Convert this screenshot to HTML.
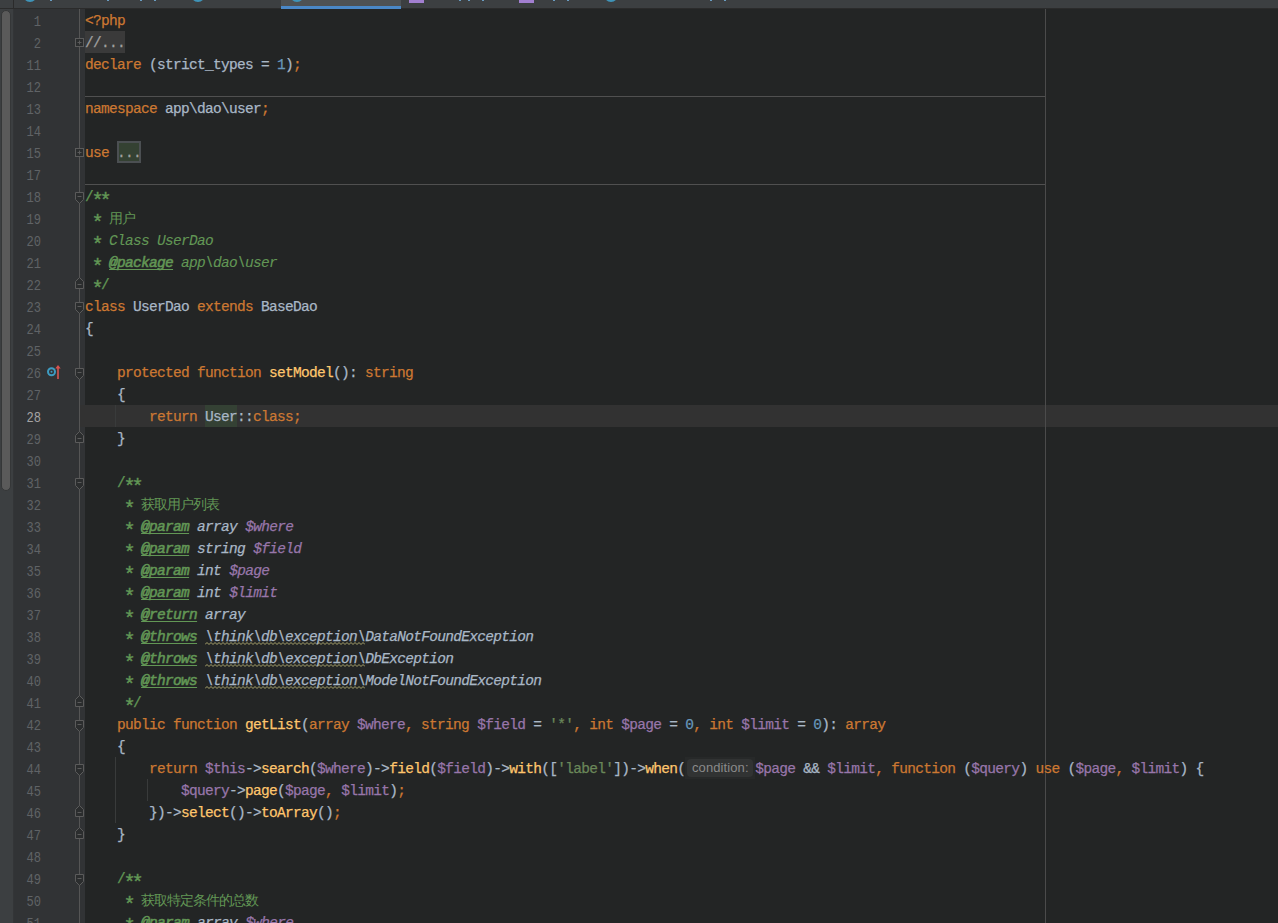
<!DOCTYPE html>
<html><head><meta charset="utf-8"><style>
html,body{margin:0;padding:0;width:1278px;height:923px;overflow:hidden;background:#232525;}
body{position:relative;font-family:"Liberation Mono",monospace;}
#tabs{position:absolute;left:0;top:0;width:1278px;height:8px;background:#3c3f41;border-bottom:1px solid #2b2b2b;}
#left{position:absolute;left:0;top:9px;width:13px;height:914px;background:#3c3f41;border-right:1px solid #333537;}
#thumb{position:absolute;left:1px;top:1px;width:8px;height:479px;background:#5a5a5a;border-radius:5px;border:1px solid #353738;}
#gutter{position:absolute;left:14px;top:9px;width:71px;height:914px;background:#313335;}
#editor{position:absolute;left:85px;top:9px;width:1193px;height:914px;background:#232525;}
#curline{position:absolute;left:80px;top:405px;width:1198px;height:22px;background:#323232;}
.ln{position:absolute;left:14px;width:27px;height:22px;line-height:22px;text-align:right;color:#606366;font-size:14.2px;letter-spacing:0px;padding-top:2px;transform:scaleX(0.85);transform-origin:100% 50%;}
.ln.cur{color:#a4a3a3;}
.row{position:absolute;left:85px;height:22px;line-height:22px;white-space:pre;font-size:14.5px;letter-spacing:-0.7px;color:#a9b7c6;-webkit-text-stroke:0.25px;}
.k{color:#cc7832}.f{color:#ffc66d}.v{color:#9876aa}.t{color:#a9b7c6}.n{color:#6897bb}.s{color:#6a8759}
.c{color:#629755}.ci{color:#629755;font-style:italic;-webkit-text-stroke:0.1px}
.tag{color:#629755;-webkit-text-stroke:0.55px;font-style:italic;text-decoration:underline;text-decoration-skip-ink:none;text-underline-offset:2px}
.dt{color:#a9b7c6;font-style:italic}.dv{color:#9876aa;font-style:italic}
.wv{color:#a9b7c6;font-style:italic}
.hl{}
.fold{color:#a0a0a0}
.foldg{color:#a0a0a0}
.hint{display:inline-block;width:71px;height:18px;vertical-align:middle;position:relative;}
.hint span{position:absolute;left:2px;top:0;width:66px;height:18px;line-height:18px;background:#333535;border-radius:4px;color:#878787;font-family:"Liberation Sans",sans-serif;font-size:12px;text-align:center}
.sep{position:absolute;left:85px;width:960px;height:1px;background:#505050;}
#margin{position:absolute;left:1045px;top:9px;width:1px;height:914px;background:#4b4b4b;}
.ast{display:inline-block;transform:translateY(4.8px) scale(1.4);}
.cjk{font-size:13.6px;letter-spacing:-0.95px;-webkit-text-stroke:0;}

</style></head><body>
<div id="tabs"></div>
<div id="left"><div id="thumb"></div></div>
<div id="gutter"></div>
<div id="editor"></div>

<div style="position:absolute;left:80px;top:405px;width:1198px;height:22px;background:#323232"></div>
<div style="position:absolute;left:85px;top:31px;width:40px;height:22px;background:#3a3a3a"></div>
<div style="position:absolute;left:117px;top:141px;width:20px;height:18px;background:#344132;border:2px solid #4b4f52"></div>
<div style="position:absolute;left:205px;top:405px;width:32px;height:22px;background:#344134"></div>
<div style="position:absolute;left:685px;top:757px;width:70px;height:22px;background:#272929"></div>
<div style="position:absolute;left:687px;top:759px;width:66px;height:18px;background:#313333;border-radius:4px"></div>
<div style="position:absolute;left:692px;top:759px;height:18px;line-height:18px;color:#8a8a8a;font-family:'Liberation Sans',sans-serif;font-size:13px;letter-spacing:0.1px;white-space:pre">condition:</div>
<div class="sep" style="top:96px"></div>
<div class="sep" style="top:184px"></div>
<div id="margin"></div>
<div style="position:absolute;left:115px;top:405px;width:1px;height:22px;background:#393b3b"></div>
<div style="position:absolute;left:115px;top:757px;width:1px;height:66px;background:#393b3b"></div>
<div style="position:absolute;left:147px;top:779px;width:1px;height:22px;background:#393b3b"></div>
<svg style="position:absolute;left:0;top:0" width="100" height="923"><line x1="79.5" y1="9" x2="79.5" y2="923" stroke="#555555" stroke-width="1"/><rect x="75.5" y="38.5" width="8" height="8" fill="#2b2d2e" stroke="#5b5b5b"/><path d="M77.5 42.5H81.5M79.5 40.5V44.5" stroke="#5b5b5b" fill="none"/><rect x="75.5" y="148.5" width="8" height="8" fill="#2b2d2e" stroke="#5b5b5b"/><path d="M77.5 152.5H81.5M79.5 150.5V154.5" stroke="#5b5b5b" fill="none"/><path d="M75.5 192.5H83.5V199.5L79.5 203.5L75.5 199.5Z" fill="#2b2d2e" stroke="#5b5b5b"/><path d="M77.5 196.5H81.5" stroke="#5b5b5b"/><path d="M75.5 302.5H83.5V309.5L79.5 313.5L75.5 309.5Z" fill="#2b2d2e" stroke="#5b5b5b"/><path d="M77.5 306.5H81.5" stroke="#5b5b5b"/><path d="M75.5 368.5H83.5V375.5L79.5 379.5L75.5 375.5Z" fill="#2b2d2e" stroke="#5b5b5b"/><path d="M77.5 372.5H81.5" stroke="#5b5b5b"/><path d="M75.5 478.5H83.5V485.5L79.5 489.5L75.5 485.5Z" fill="#2b2d2e" stroke="#5b5b5b"/><path d="M77.5 482.5H81.5" stroke="#5b5b5b"/><path d="M75.5 720.5H83.5V727.5L79.5 731.5L75.5 727.5Z" fill="#2b2d2e" stroke="#5b5b5b"/><path d="M77.5 724.5H81.5" stroke="#5b5b5b"/><path d="M75.5 764.5H83.5V771.5L79.5 775.5L75.5 771.5Z" fill="#2b2d2e" stroke="#5b5b5b"/><path d="M77.5 768.5H81.5" stroke="#5b5b5b"/><path d="M75.5 874.5H83.5V881.5L79.5 885.5L75.5 881.5Z" fill="#2b2d2e" stroke="#5b5b5b"/><path d="M77.5 878.5H81.5" stroke="#5b5b5b"/><path d="M79.5 277.5L83.5 281.5V288.5H75.5V281.5Z" fill="#2b2d2e" stroke="#5b5b5b"/><path d="M77.5 284.5H81.5" stroke="#5b5b5b"/><path d="M79.5 431.5L83.5 435.5V442.5H75.5V435.5Z" fill="#2b2d2e" stroke="#5b5b5b"/><path d="M77.5 438.5H81.5" stroke="#5b5b5b"/><path d="M79.5 695.5L83.5 699.5V706.5H75.5V699.5Z" fill="#2b2d2e" stroke="#5b5b5b"/><path d="M77.5 702.5H81.5" stroke="#5b5b5b"/><path d="M79.5 805.5L83.5 809.5V816.5H75.5V809.5Z" fill="#2b2d2e" stroke="#5b5b5b"/><path d="M77.5 812.5H81.5" stroke="#5b5b5b"/><path d="M79.5 827.5L83.5 831.5V838.5H75.5V831.5Z" fill="#2b2d2e" stroke="#5b5b5b"/><path d="M77.5 834.5H81.5" stroke="#5b5b5b"/><circle cx="51.5" cy="371.7" r="3.5" fill="none" stroke="#3d9bc1" stroke-width="2"/><circle cx="51.5" cy="371.7" r="1" fill="#3d9bc1"/><rect x="57" y="368" width="2" height="11" fill="#b34e4b"/><path d="M58 365L60.7 368.5H55.3Z" fill="#d9534f"/></svg>
<svg style="position:absolute;left:205px;top:0" width="160" height="923"><path d="M0 644.5 L2 642.5 L4 644.5 L6 642.5 L8 644.5 L10 642.5 L12 644.5 L14 642.5 L16 644.5 L18 642.5 L20 644.5 L22 642.5 L24 644.5 L26 642.5 L28 644.5 L30 642.5 L32 644.5 L34 642.5 L36 644.5 L38 642.5 L40 644.5 L42 642.5 L44 644.5 L46 642.5 L48 644.5 L50 642.5 L52 644.5 L54 642.5 L56 644.5 L58 642.5 L60 644.5 L62 642.5 L64 644.5 L66 642.5 L68 644.5 L70 642.5 L72 644.5 L74 642.5 L76 644.5 L78 642.5 L80 644.5 L82 642.5 L84 644.5 L86 642.5 L88 644.5 L90 642.5 L92 644.5 L94 642.5 L96 644.5 L98 642.5 L100 644.5 L102 642.5 L104 644.5 L106 642.5 L108 644.5 L110 642.5 L112 644.5 L114 642.5 L116 644.5 L118 642.5 L120 644.5 L122 642.5 L124 644.5 L126 642.5 L128 644.5 L130 642.5 L132 644.5 L134 642.5 L136 644.5 L138 642.5 L140 644.5 L142 642.5 L144 644.5 L146 642.5 L148 644.5 L150 642.5 L152 644.5 L154 642.5 L156 644.5 L158 642.5 L160 644.5" fill="none" stroke="#aaa56e" stroke-width="1"/><path d="M0 666.5 L2 664.5 L4 666.5 L6 664.5 L8 666.5 L10 664.5 L12 666.5 L14 664.5 L16 666.5 L18 664.5 L20 666.5 L22 664.5 L24 666.5 L26 664.5 L28 666.5 L30 664.5 L32 666.5 L34 664.5 L36 666.5 L38 664.5 L40 666.5 L42 664.5 L44 666.5 L46 664.5 L48 666.5 L50 664.5 L52 666.5 L54 664.5 L56 666.5 L58 664.5 L60 666.5 L62 664.5 L64 666.5 L66 664.5 L68 666.5 L70 664.5 L72 666.5 L74 664.5 L76 666.5 L78 664.5 L80 666.5 L82 664.5 L84 666.5 L86 664.5 L88 666.5 L90 664.5 L92 666.5 L94 664.5 L96 666.5 L98 664.5 L100 666.5 L102 664.5 L104 666.5 L106 664.5 L108 666.5 L110 664.5 L112 666.5 L114 664.5 L116 666.5 L118 664.5 L120 666.5 L122 664.5 L124 666.5 L126 664.5 L128 666.5 L130 664.5 L132 666.5 L134 664.5 L136 666.5 L138 664.5 L140 666.5 L142 664.5 L144 666.5 L146 664.5 L148 666.5 L150 664.5 L152 666.5 L154 664.5 L156 666.5 L158 664.5 L160 666.5" fill="none" stroke="#aaa56e" stroke-width="1"/><path d="M0 688.5 L2 686.5 L4 688.5 L6 686.5 L8 688.5 L10 686.5 L12 688.5 L14 686.5 L16 688.5 L18 686.5 L20 688.5 L22 686.5 L24 688.5 L26 686.5 L28 688.5 L30 686.5 L32 688.5 L34 686.5 L36 688.5 L38 686.5 L40 688.5 L42 686.5 L44 688.5 L46 686.5 L48 688.5 L50 686.5 L52 688.5 L54 686.5 L56 688.5 L58 686.5 L60 688.5 L62 686.5 L64 688.5 L66 686.5 L68 688.5 L70 686.5 L72 688.5 L74 686.5 L76 688.5 L78 686.5 L80 688.5 L82 686.5 L84 688.5 L86 686.5 L88 688.5 L90 686.5 L92 688.5 L94 686.5 L96 688.5 L98 686.5 L100 688.5 L102 686.5 L104 688.5 L106 686.5 L108 688.5 L110 686.5 L112 688.5 L114 686.5 L116 688.5 L118 686.5 L120 688.5 L122 686.5 L124 688.5 L126 686.5 L128 688.5 L130 686.5 L132 688.5 L134 686.5 L136 688.5 L138 686.5 L140 688.5 L142 686.5 L144 688.5 L146 686.5 L148 688.5 L150 686.5 L152 688.5 L154 686.5 L156 688.5 L158 686.5 L160 688.5" fill="none" stroke="#aaa56e" stroke-width="1"/></svg>
<div style="position:absolute;left:13px;top:0;width:1px;height:9px;background:#2b2b2b"></div><div style="position:absolute;left:281px;top:0;width:120px;height:9px;background:#4e5254"></div><div style="position:absolute;left:281px;top:6px;width:120px;height:3px;background:#4a88c7"></div><div style="position:absolute;left:23px;top:-12px;width:14px;height:14px;border-radius:50%;background:#3f94b8"></div><div style="position:absolute;left:191px;top:-12px;width:14px;height:14px;border-radius:50%;background:#3f94b8"></div><div style="position:absolute;left:290px;top:-12px;width:14px;height:14px;border-radius:50%;background:#3f94b8"></div><div style="position:absolute;left:604px;top:-12px;width:14px;height:14px;border-radius:50%;background:#3f94b8"></div><div style="position:absolute;left:409px;top:0;width:15px;height:3px;background:#a27fd0"></div><div style="position:absolute;left:519px;top:0;width:15px;height:3px;background:#a27fd0"></div><div style="position:absolute;left:50px;top:0;width:2px;height:1px;background:#6a9cc0"></div><div style="position:absolute;left:107px;top:0;width:2px;height:1px;background:#6a9cc0"></div><div style="position:absolute;left:140px;top:0;width:2px;height:1px;background:#6a9cc0"></div><div style="position:absolute;left:154px;top:0;width:2px;height:1px;background:#6a9cc0"></div><div style="position:absolute;left:459px;top:0;width:2px;height:1px;background:#6a9cc0"></div><div style="position:absolute;left:468px;top:0;width:2px;height:1px;background:#6a9cc0"></div><div style="position:absolute;left:482px;top:0;width:2px;height:1px;background:#6a9cc0"></div><div style="position:absolute;left:553px;top:0;width:2px;height:1px;background:#6a9cc0"></div><div style="position:absolute;left:567px;top:0;width:2px;height:1px;background:#6a9cc0"></div><div style="position:absolute;left:710px;top:0;width:2px;height:1px;background:#6a9cc0"></div><div style="position:absolute;left:724px;top:0;width:2px;height:1px;background:#6a9cc0"></div>
<div class="ln" style="top:9px">1</div>
<div class="ln" style="top:31px">2</div>
<div class="ln" style="top:53px">11</div>
<div class="ln" style="top:75px">12</div>
<div class="ln" style="top:97px">13</div>
<div class="ln" style="top:119px">14</div>
<div class="ln" style="top:141px">15</div>
<div class="ln" style="top:163px">17</div>
<div class="ln" style="top:185px">18</div>
<div class="ln" style="top:207px">19</div>
<div class="ln" style="top:229px">20</div>
<div class="ln" style="top:251px">21</div>
<div class="ln" style="top:273px">22</div>
<div class="ln" style="top:295px">23</div>
<div class="ln" style="top:317px">24</div>
<div class="ln" style="top:339px">25</div>
<div class="ln" style="top:361px">26</div>
<div class="ln" style="top:383px">27</div>
<div class="ln cur" style="top:405px">28</div>
<div class="ln" style="top:427px">29</div>
<div class="ln" style="top:449px">30</div>
<div class="ln" style="top:471px">31</div>
<div class="ln" style="top:493px">32</div>
<div class="ln" style="top:515px">33</div>
<div class="ln" style="top:537px">34</div>
<div class="ln" style="top:559px">35</div>
<div class="ln" style="top:581px">36</div>
<div class="ln" style="top:603px">37</div>
<div class="ln" style="top:625px">38</div>
<div class="ln" style="top:647px">39</div>
<div class="ln" style="top:669px">40</div>
<div class="ln" style="top:691px">41</div>
<div class="ln" style="top:713px">42</div>
<div class="ln" style="top:735px">43</div>
<div class="ln" style="top:757px">44</div>
<div class="ln" style="top:779px">45</div>
<div class="ln" style="top:801px">46</div>
<div class="ln" style="top:823px">47</div>
<div class="ln" style="top:845px">48</div>
<div class="ln" style="top:867px">49</div>
<div class="ln" style="top:889px">50</div>
<div class="ln" style="top:911px">51</div>
<div class="row" style="top:10px"><span class="k">&lt;?php</span></div>
<div class="row" style="top:32px"><span class="fold">//...</span></div>
<div class="row" style="top:54px"><span class="k">declare</span><span class="t"> (strict_types = </span><span class="n">1</span><span class="t">)</span><span class="k">;</span></div>
<div class="row" style="top:76px"></div>
<div class="row" style="top:98px"><span class="k">namespace</span><span class="t"> app\dao\user</span><span class="k">;</span></div>
<div class="row" style="top:120px"></div>
<div class="row" style="top:142px"><span class="k">use</span><span class="t"> </span><span class="foldg">...</span></div>
<div class="row" style="top:164px"></div>
<div class="row" style="top:186px"><span class="c">/<span class="ast">*</span><span class="ast">*</span></span></div>
<div class="row" style="top:208px"><span class="c"> <span class="ast">*</span> <span class="cjk">用户</span></span></div>
<div class="row" style="top:230px"><span class="c"> <span class="ast">*</span> </span><span class="ci">Class UserDao</span></div>
<div class="row" style="top:252px"><span class="c"> <span class="ast">*</span> </span><span class="tag">@package</span><span class="c"> </span><span class="ci">app\dao\user</span></div>
<div class="row" style="top:274px"><span class="c"> <span class="ast">*</span>/</span></div>
<div class="row" style="top:296px"><span class="k">class</span><span class="t"> UserDao </span><span class="k">extends</span><span class="t"> BaseDao</span></div>
<div class="row" style="top:318px"><span class="t">{</span></div>
<div class="row" style="top:340px"></div>
<div class="row" style="top:362px"><span class="t">    </span><span class="k">protected function </span><span class="f">setModel</span><span class="t">(): </span><span class="k">string</span></div>
<div class="row" style="top:384px"><span class="t">    {</span></div>
<div class="row" style="top:406px"><span class="t">        </span><span class="k">return </span><span class="hl">User</span><span class="t">::</span><span class="k">class;</span></div>
<div class="row" style="top:428px"><span class="t">    }</span></div>
<div class="row" style="top:450px"></div>
<div class="row" style="top:472px"><span class="t">    </span><span class="c">/<span class="ast">*</span><span class="ast">*</span></span></div>
<div class="row" style="top:494px"><span class="t">    </span><span class="c"> <span class="ast">*</span> <span class="cjk">获取用户列表</span></span></div>
<div class="row" style="top:516px"><span class="t">    </span><span class="c"> <span class="ast">*</span> </span><span class="tag">@param</span><span class="c"> </span><span class="dt">array</span><span class="c"> </span><span class="dv">$where</span></div>
<div class="row" style="top:538px"><span class="t">    </span><span class="c"> <span class="ast">*</span> </span><span class="tag">@param</span><span class="c"> </span><span class="dt">string</span><span class="c"> </span><span class="dv">$field</span></div>
<div class="row" style="top:560px"><span class="t">    </span><span class="c"> <span class="ast">*</span> </span><span class="tag">@param</span><span class="c"> </span><span class="dt">int</span><span class="c"> </span><span class="dv">$page</span></div>
<div class="row" style="top:582px"><span class="t">    </span><span class="c"> <span class="ast">*</span> </span><span class="tag">@param</span><span class="c"> </span><span class="dt">int</span><span class="c"> </span><span class="dv">$limit</span></div>
<div class="row" style="top:604px"><span class="t">    </span><span class="c"> <span class="ast">*</span> </span><span class="tag">@return</span><span class="c"> </span><span class="dt">array</span></div>
<div class="row" style="top:626px"><span class="t">    </span><span class="c"> <span class="ast">*</span> </span><span class="tag">@throws</span><span class="c"> </span><span class="wv">\think\db\exception</span><span class="dt">\DataNotFoundException</span></div>
<div class="row" style="top:648px"><span class="t">    </span><span class="c"> <span class="ast">*</span> </span><span class="tag">@throws</span><span class="c"> </span><span class="wv">\think\db\exception</span><span class="dt">\DbException</span></div>
<div class="row" style="top:670px"><span class="t">    </span><span class="c"> <span class="ast">*</span> </span><span class="tag">@throws</span><span class="c"> </span><span class="wv">\think\db\exception</span><span class="dt">\ModelNotFoundException</span></div>
<div class="row" style="top:692px"><span class="t">    </span><span class="c"> <span class="ast">*</span>/</span></div>
<div class="row" style="top:714px"><span class="t">    </span><span class="k">public function </span><span class="f">getList</span><span class="t">(</span><span class="k">array </span><span class="v">$where</span><span class="k">, string </span><span class="v">$field</span><span class="t"> = </span><span class="s">&#x27;*&#x27;</span><span class="k">, int </span><span class="v">$page</span><span class="t"> = </span><span class="n">0</span><span class="k">, int </span><span class="v">$limit</span><span class="t"> = </span><span class="n">0</span><span class="t">): </span><span class="k">array</span></div>
<div class="row" style="top:736px"><span class="t">    {</span></div>
<div class="row" style="top:758px"><span class="t">        </span><span class="k">return </span><span class="v">$this</span><span class="t">-&gt;</span><span class="f">search</span><span class="t">(</span><span class="v">$where</span><span class="t">)-&gt;</span><span class="f">field</span><span class="t">(</span><span class="v">$field</span><span class="t">)-&gt;</span><span class="f">with</span><span class="t">([</span><span class="s">&#x27;label&#x27;</span><span class="t">])-&gt;</span><span class="f">when</span><span class="t">(</span><span style="display:inline-block;width:70px"></span><span class="v">$page</span><span class="t"> &amp;&amp; </span><span class="v">$limit</span><span class="k">, function </span><span class="t">(</span><span class="v">$query</span><span class="t">) </span><span class="k">use </span><span class="t">(</span><span class="v">$page</span><span class="k">, </span><span class="v">$limit</span><span class="t">) {</span></div>
<div class="row" style="top:780px"><span class="t">            </span><span class="v">$query</span><span class="t">-&gt;</span><span class="f">page</span><span class="t">(</span><span class="v">$page</span><span class="k">, </span><span class="v">$limit</span><span class="t">)</span><span class="k">;</span></div>
<div class="row" style="top:802px"><span class="t">        })-&gt;</span><span class="f">select</span><span class="t">()-&gt;</span><span class="f">toArray</span><span class="t">()</span><span class="k">;</span></div>
<div class="row" style="top:824px"><span class="t">    }</span></div>
<div class="row" style="top:846px"></div>
<div class="row" style="top:868px"><span class="t">    </span><span class="c">/<span class="ast">*</span><span class="ast">*</span></span></div>
<div class="row" style="top:890px"><span class="t">    </span><span class="c"> <span class="ast">*</span> <span class="cjk">获取特定条件的总数</span></span></div>
<div class="row" style="top:912px"><span class="t">    </span><span class="c"> <span class="ast">*</span> </span><span class="tag">@param</span><span class="c"> </span><span class="dt">array</span><span class="c"> </span><span class="dv">$where</span></div>
</body></html>
